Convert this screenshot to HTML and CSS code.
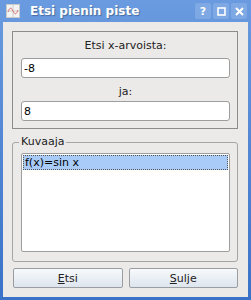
FILE: index.html
```html
<!DOCTYPE html>
<html lang="fi">
<head>
    <meta charset="UTF-8">
    <title>Etsi pienin piste</title>
    <link rel="stylesheet" href="styles.css">
</head>
<body>
    <div class="window">
        <div class="titlebar">
            <span class="app-icon">
                <svg width="14" height="14" viewBox="0 0 14 14">
                    <rect x="0.5" y="0.5" width="13" height="13" fill="#f4f4f4" stroke="#c9c9c9"/>
                    <line x1="7" y1="1" x2="7" y2="13" stroke="#cfcfcf"/>
                    <line x1="1" y1="7" x2="13" y2="7" stroke="#cfcfcf"/>
                    <path d="M2 8 C4 3 5 3 7 7 S10 11 12 6" fill="none" stroke="#e07070" stroke-width="1"/>
                </svg>
            </span>
            <span class="title">Etsi pienin piste</span>
            <div class="title-buttons">
                <span class="tbtn">?</span>
                <span class="tbtn">
                    <svg width="9" height="9" viewBox="0 0 9 9"><rect x="1" y="1" width="7" height="7" fill="none" stroke="#fff" stroke-width="1.6"/></svg>
                </span>
                <span class="tbtn">
                    <svg width="9" height="9" viewBox="0 0 9 9"><path d="M1 1 L8 8 M8 1 L1 8" stroke="#fff" stroke-width="2"/></svg>
                </span>
            </div>
        </div>

        <div class="client">
            <div class="range-box">
                <div class="label">Etsi x-arvoista:</div>
                <input type="text" class="field" value="-8">
                <div class="label label-and">ja:</div>
                <input type="text" class="field" value="8">
            </div>

            <div class="graph-box">
                <span class="legend">Kuvaaja</span>
                <div class="list">
                    <div class="list-item selected">f(x)=sin x</div>
                </div>
            </div>

            <div class="buttons">
                <button class="btn"><u>E</u>tsi</button>
                <button class="btn"><u>S</u>ulje</button>
            </div>
        </div>
    </div>
</body>
</html>
```

FILE: styles.css
```css
body {
    margin: 0;
    font-family: "DejaVu Sans", sans-serif;
    font-size: 11px;
    color: #222;
}

.window {
    width: 251px;
    height: 300px;
    box-sizing: border-box;
    background: linear-gradient(#6a9be0, #3a72c8);
    padding: 0 3px 3px 3px;
    display: flex;
    flex-direction: column;
}

.titlebar {
    height: 22px;
    display: flex;
    align-items: center;
    flex-shrink: 0;
}

.app-icon {
    display: flex;
    margin-left: 3px;
}

.title {
    margin-left: 10px;
    color: white;
    font-weight: bold;
    font-size: 12px;
    text-shadow: 1px 1px 1px rgba(0, 0, 0, 0.3);
}

.title-buttons {
    margin-left: auto;
    margin-right: 1px;
    display: flex;
    gap: 2px;
}

.tbtn {
    width: 16px;
    height: 16px;
    display: flex;
    align-items: center;
    justify-content: center;
    background: rgba(255, 255, 255, 0.15);
    border-radius: 2px;
    color: white;
    font-weight: bold;
    font-size: 11px;
}

.client {
    height: 275px;
    box-sizing: border-box;
    background-color: #ebeae8;
    padding: 9px 10px 0 9px;
}

.range-box {
    height: 98px;
    box-sizing: border-box;
    border: 1px solid #8c8c8c;
    padding: 7px 7px 0 8px;
    display: flex;
    flex-direction: column;
}

.label {
    text-align: center;
    height: 14px;
    line-height: 14px;
    margin-bottom: 5px;
}

.label-and {
    margin-top: 7px;
    margin-bottom: 2px;
}

.field {
    height: 20px;
    flex-shrink: 0;
    box-sizing: border-box;
    border: 1px solid #9d9d9d;
    border-radius: 3px;
    padding: 0 2px;
    font-family: "DejaVu Sans", sans-serif;
    font-size: 11px;
    color: #000;
    background: white;
    margin: 0;
}

.graph-box {
    position: relative;
    margin-top: 13px;
    height: 120px;
    box-sizing: border-box;
    border: 1px solid #a5a5a5;
    border-radius: 3px;
    padding: 10px 7px 0 8px;
}

.legend {
    position: absolute;
    top: -8px;
    left: 6px;
    padding: 0 2px;
    line-height: 14px;
    background-color: #ebeae8;
}

.list {
    height: 99px;
    box-sizing: border-box;
    border: 1px solid #9d9d9d;
    border-radius: 2px;
    background: white;
    padding: 1px;
}

.list-item {
    height: 15px;
    line-height: 15px;
    padding-left: 2px;
    color: #000;
}

.list-item.selected {
    background-color: #a8cbf7;
    outline: 1px dotted #555;
    outline-offset: -1px;
}

.buttons {
    margin-top: 6px;
    display: flex;
    gap: 6px;
    padding-left: 1px;
}

.btn {
    flex: 1;
    height: 20px;
    border: 1px solid #9a9ea3;
    border-radius: 2px;
    background: linear-gradient(#f7f9fb, #dde5ee);
    font-family: "DejaVu Sans", sans-serif;
    font-size: 11px;
    color: #222;
    padding: 0;
}
```
